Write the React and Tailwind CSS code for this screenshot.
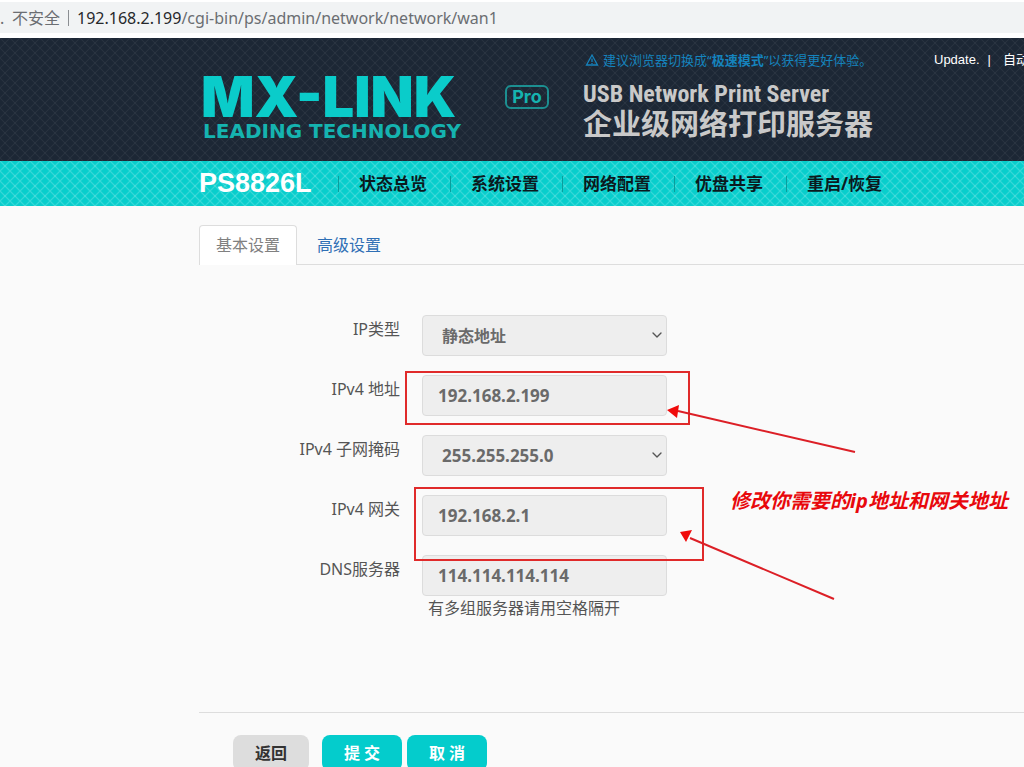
import { ChevronDown } from "lucide-react";

const menu = ["状态总览", "系统设置", "网络配置", "优盘共享", "重启/恢复"];

const fields = [
  { id: "proto", label: "IP类型", type: "select", value: "静态地址", size: "text-base" },
  { id: "ipaddr", label: "IPv4 地址", type: "text", value: "192.168.2.199", size: "text-[17px]" },
  { id: "netmask", label: "IPv4 子网掩码", type: "select", value: "255.255.255.0", size: "text-[17px]" },
  { id: "gateway", label: "IPv4 网关", type: "text", value: "192.168.2.1", size: "text-[17px]" },
  { id: "dns", label: "DNS服务器", type: "text", value: "114.114.114.114", size: "text-[17px]" },
];

const AddressBar = () => (
  <div className="bg-white pt-0.5 pb-[5px]">
    <div className="flex h-[31px] items-center bg-[#f1f3f4] text-base whitespace-nowrap text-[#6b6e72]">
      <span className="w-3 shrink-0">.</span>
      <span>不安全</span>
      <span className="mx-2 h-4 w-px bg-[#8b8e92]" />
      <span>
        <span className="text-[#26282b]">192.168.2.199</span>
        /cgi-bin/ps/admin/network/network/wan1
      </span>
    </div>
  </div>
);

const Logo = () => (
  <div className="flex w-[384px] shrink-0 pt-[35px] pl-0.5 text-[#0accca]">
    <div className="w-[304px]">
      <div className="font-['Inter','DejaVu_Sans',sans-serif] text-[56px] leading-[48px] font-black">
        MX-LINK
      </div>
      <div className="pl-0.5 font-['DejaVu_Sans',sans-serif] text-xl leading-5 font-bold text-[#15b3b0]">
        LEADING TECHNOLOGY
      </div>
    </div>
    <span className="mt-3 flex h-6 w-11 items-center justify-center rounded-md border-2 border-[#1c8f91] font-['Inter',sans-serif] text-lg font-bold text-[#15b3b0]">
      Pro
    </span>
  </div>
);

const Header = () => (
  <header className="flex h-[123px] overflow-hidden bg-[#1c2735] bg-[linear-gradient(45deg,transparent_44%,#ffffff0d_50%,transparent_56%),linear-gradient(-45deg,transparent_44%,#ffffff0d_50%,transparent_56%)] bg-size-[10px_10px] pl-[199px] whitespace-nowrap">
    <Logo />
    <div className="w-[351px] shrink-0 pt-3">
      <p className="flex items-center gap-1 pl-0.5 text-[13px] leading-5 text-[#1583bd]">
        <svg viewBox="0 0 14 14" className="size-3.5" fill="none" stroke="currentColor" strokeWidth="1.3">
          <path d="M7 2 L12.5 12 H1.5 Z M7 5.5 V9 M7 10 V11" />
        </svg>
        <span>
          建议浏览器切换成“<b>极速模式</b>”以获得更好体验。
        </span>
      </p>
      <h2 className="pt-2 font-['Roboto_Condensed','Liberation_Sans_Narrow',sans-serif] text-2xl leading-8 font-bold text-[#c9c9c9]">
        USB Network Print Server
      </h2>
      <h1 className="text-[29px] leading-7 font-bold text-[#c9c9c9]">
        企业级网络打印服务器
      </h1>
    </div>
    <div className="flex shrink-0 gap-2 pt-3 font-['Liberation_Sans','Noto_Sans_CJK_SC',sans-serif] text-[13px] leading-5 text-white">
      <a href="#update">Update.</a>
      <span>|</span>
      <a href="#auto" className="ml-1">自动</a>
    </div>
  </header>
);

const Nav = () => (
  <nav className="flex h-[45px] items-center bg-[#08cecc] bg-[linear-gradient(45deg,transparent_42%,#ffffff30_50%,transparent_58%),linear-gradient(-45deg,transparent_42%,#ffffff30_50%,transparent_58%)] bg-size-[10px_10px] pl-[199px] whitespace-nowrap">
    <span className="w-[139px] font-['Liberation_Sans',sans-serif] text-[27px] font-bold text-white">
      PS8826L
    </span>
    {menu.map((item) => (
      <span key={item} className="flex w-28 shrink-0 items-center gap-5">
        <span className="h-4 w-px bg-[#0a9d9c]" />
        <a href="#menu" className="text-[17px] font-bold text-[#0b1a1e]">
          {item}
        </a>
      </span>
    ))}
  </nav>
);

const Tabs = () => (
  <div className="flex h-10 border-b border-[#dddddd] leading-[38px]">
    <a
      href="#basic"
      className="-mb-px w-[98px] rounded-t border border-b-0 border-[#dddddd] bg-white text-center text-[#808080]"
    >
      基本设置
    </a>
    <a href="#advanced" className="px-5 pt-px text-[#2f6fb5]">
      高级设置
    </a>
  </div>
);

const Field = ({ id, label, type, value, size }) => {
  const box = `h-[41px] w-[245px] rounded border border-[#dcdcdc] bg-[#eeeeee] font-bold text-[#6a6a6a] ${size}`;

  return (
    <div className="flex items-start gap-[22px]">
      <label htmlFor={id} className="w-[201px] text-right leading-7 text-[#555555]">
        {label}
      </label>
      {type === "select" ? (
        <div className="relative">
          <select id={id} className={`${box} appearance-none pl-[19px]`}>
            <option>{value}</option>
          </select>
          <ChevronDown className="pointer-events-none absolute top-3 right-0.5 size-4 text-[#555555]" />
        </div>
      ) : (
        <input id={id} type="text" defaultValue={value} className={`${box} px-[15px]`} />
      )}
    </div>
  );
};

/* Red marks that sit over the form */
const Marks = () => (
  <div className="pointer-events-none absolute inset-0">
    <div className="absolute top-[106px] left-[206px] h-[54px] w-[285px] border-2 border-[#e02a2a]" />
    <div className="absolute top-[222px] left-[215px] h-[74px] w-[290px] border-2 border-[#e02a2a]" />
    <svg
      viewBox="0 0 200 200"
      className="absolute top-[135px] left-[467px] size-[200px]"
      stroke="#dc1f26"
      strokeWidth="2"
    >
      <path d="M12 11 L189 52 M24 138 L168 199" fill="none" />
      <path d="M1 10 L13 5 L11 18 Z M14 132 L26 130 L20 142 Z" fill="#f00b0b" stroke="none" />
    </svg>
    <p className="absolute top-[220px] left-[531px] text-xl leading-8 font-bold whitespace-nowrap text-[#e8080c] italic">
      修改你需要的ip地址和网关地址
    </p>
  </div>
);

const App = () => {
  return (
    <div className="h-screen overflow-hidden bg-[#fafafa] font-['Noto_Sans','Noto_Sans_CJK_SC',sans-serif] text-base">
      <AddressBar />
      <Header />
      <Nav />

      <main className="ml-[199px] pt-[19px]">
        <Tabs />

        <form className="relative pt-[50px]">
          <div className="flex flex-col gap-[19px]">
            {fields.map((field) => (
              <Field key={field.id} {...field} />
            ))}
          </div>
          <p className="pl-[229px] leading-6 text-[#555555]">有多组服务器请用空格隔开</p>

          <div className="mt-[92px] flex border-t border-[#dddddd] pt-[22px] pl-[34px] font-bold">
            <button type="button" className="h-9 w-[76px] rounded-lg bg-[#dddddd] text-[#333333]">
              返回
            </button>
            <button type="submit" className="ml-[13px] h-9 w-20 rounded-lg bg-[#04cccc] text-white">
              提 交
            </button>
            <button type="reset" className="ml-[5px] h-9 w-20 rounded-lg bg-[#04cccc] text-white">
              取 消
            </button>
          </div>

          <Marks />
        </form>
      </main>
    </div>
  );
};

export default App;
